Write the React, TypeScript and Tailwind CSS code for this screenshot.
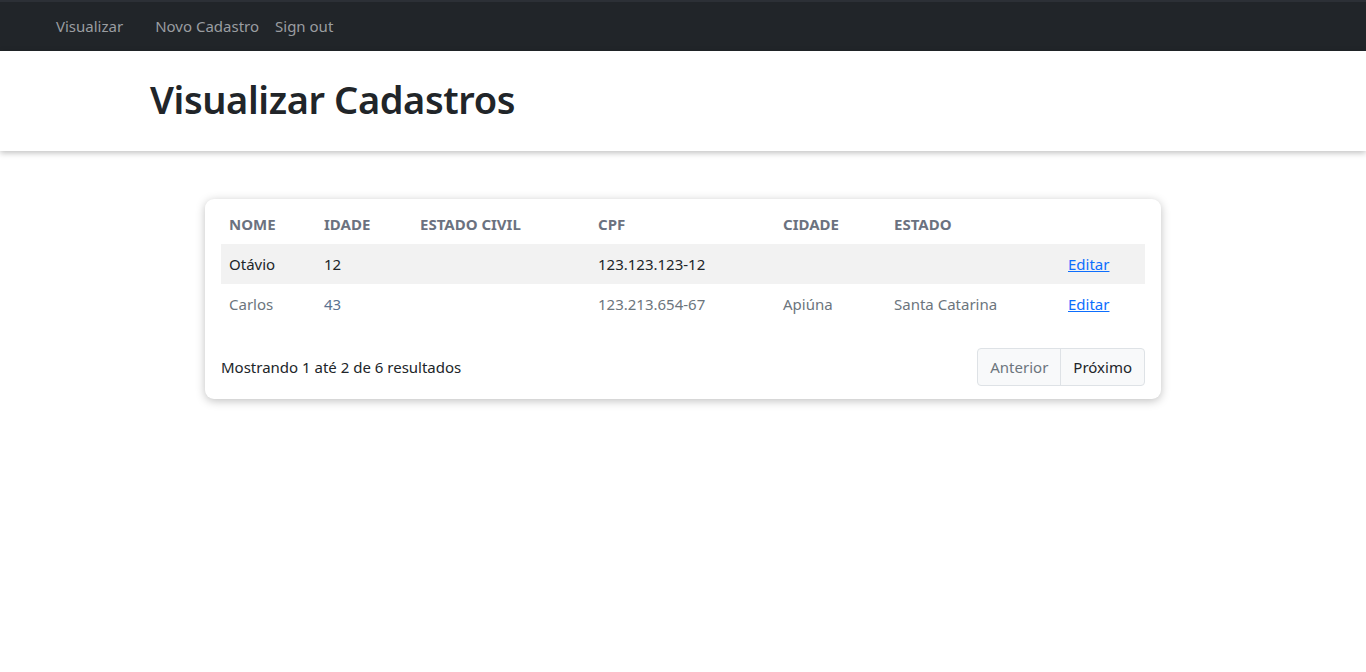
const rows = [
  { nome: "Otávio", idade: "12", civil: "", cpf: "123.123.123-12", cidade: "", estado: "" },
  { nome: "Carlos", idade: "43", civil: "", cpf: "123.213.654-67", cidade: "Apiúna", estado: "Santa Catarina" },
];

const cols = "grid grid-cols-[95px_96px_178px_185px_111px_174px_1fr]";

export default function App() {
  return (
    <div className="min-h-screen bg-white text-[#212529]" style={{ fontFamily: '"Noto Sans", "Open Sans", sans-serif' }}>
      <nav className="flex h-[51px] items-center bg-[#212529] border-t-2 border-[#2c3036] pl-[56px] text-[15px] text-[#9a9da1]">
        <a className="mr-[32px]">Visualizar</a>
        <a className="mr-[16px]">Novo Cadastro</a>
        <a>Sign out</a>
      </nav>

      <header className="relative z-10 flex h-[100px] items-center bg-white pb-[4px] pl-[150px] shadow-[0_2px_6px_rgba(0,0,0,0.25)]">
        <h1 className="text-[38px] font-semibold leading-none tracking-[-0.4px]">Visualizar Cadastros</h1>
      </header>

      <main className="flex justify-center pt-[48px]">
        <div className="w-[956px] rounded-[9px] bg-white px-4 pt-[14px] pb-[13px] shadow-[0_2px_10px_rgba(0,0,0,0.25)]">
          <div className={`${cols} h-[31px] items-start text-[15px] leading-[22px] font-bold uppercase text-[#6b7280]`}>
            <span className="px-2">Nome</span>
            <span className="px-2">Idade</span>
            <span className="px-2">Estado Civil</span>
            <span className="px-2">CPF</span>
            <span className="px-2">Cidade</span>
            <span className="px-2">Estado</span>
            <span className="px-2" />
          </div>
          {rows.map((r, i) => (
            <div
              key={r.cpf}
              className={`${cols} h-[40px] items-center text-[15px] ${i % 2 === 0 ? "bg-[#f2f2f2] text-[#212529]" : "bg-white text-[#6c757d]"}`}
            >
              <span className="px-2">{r.nome}</span>
              <span className={`px-2 ${i % 2 === 1 ? "text-[#5b7290]" : ""}`}>{r.idade}</span>
              <span className="px-2">{r.civil}</span>
              <span className="px-2">{r.cpf}</span>
              <span className="px-2">{r.cidade}</span>
              <span className="px-2">{r.estado}</span>
              <span className="px-2">
                <a className="text-[#0d6efd] underline">Editar</a>
              </span>
            </div>
          ))}

          <div className="mt-[24px] flex items-center justify-between">
            <span className="text-[15px]">Mostrando 1 até 2 de 6 resultados</span>
            <div className="flex h-[38px] overflow-hidden rounded-[4px] border border-[#dee2e6] bg-[#f8f9fa] text-[15px]">
              <button className="px-[12px] text-[#6c757d]">Anterior</button>
              <button className="border-l border-[#dee2e6] px-[12px] text-[#212529]">Próximo</button>
            </div>
          </div>
        </div>
      </main>
    </div>
  );
}
